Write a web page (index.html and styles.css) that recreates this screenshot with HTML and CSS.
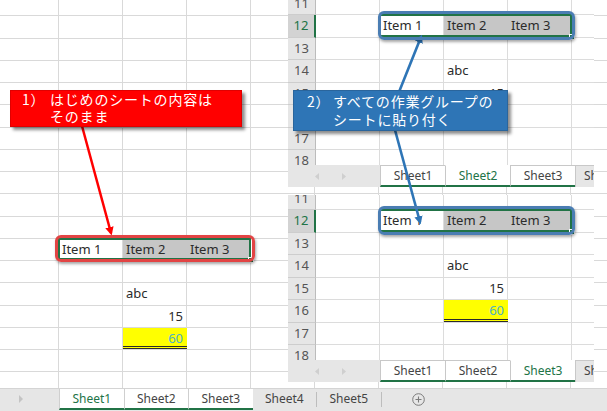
FILE: index.html
```html
<!DOCTYPE html>
<html lang="ja">
<head>
<meta charset="utf-8">
<title>作業グループ</title>
<link rel="stylesheet" href="styles.css">
</head>
<body>
<div class="app">
  <div class="sheet">
    <div class="grid">
      <div class="row"></div><div class="row"></div><div class="row"></div><div class="row"></div>
      <div class="row"></div><div class="row"></div><div class="row"></div><div class="row"></div>
      <div class="row"></div><div class="row"></div><div class="row"></div>
      <div class="row">
        <div class="c"></div>
        <div class="range hl-red">
          <div class="c">Item 1</div><div class="c sel">Item 2</div><div class="c sel">Item 3</div>
          <span class="handle"></span>
        </div>
      </div>
      <div class="row"></div>
      <div class="row"><div class="c"></div><div class="c"></div><div class="c">abc</div></div>
      <div class="row"><div class="c"></div><div class="c"></div><div class="c num">15</div></div>
      <div class="row"><div class="c"></div><div class="c"></div><div class="c num total">60</div></div>
      <div class="row"></div><div class="row"></div>
    </div>
  </div>

  <div class="tabbar">
    <div class="nav"><svg width="6" height="8" viewBox="0 0 6 8"><path d="M1 0 L5 4 L1 8 Z" fill="#c4c4c4"/></svg></div>
    <div class="tab grp on">Sheet1</div>
    <div class="tab grp">Sheet2</div>
    <div class="tab grp">Sheet3</div>
    <div class="tab sep">Sheet4</div>
    <div class="tab sep">Sheet5</div>
    <div class="add"><svg width="13" height="13" viewBox="0 0 13 13"><circle cx="6.5" cy="6.5" r="5.8" fill="none" stroke="#7a7a7a" stroke-width="1"/><path d="M6.5 3.5 V9.5 M3.5 6.5 H9.5" stroke="#7a7a7a" stroke-width="1.1"/></svg></div>
  </div>

  <div class="panel panel-top">
    <div class="prows">
      <div class="prow"><div class="rh">11</div></div>
      <div class="prow"><div class="rh on">12</div><div class="c"></div>
        <div class="range hl-blue"><div class="c">Item 1</div><div class="c sel">Item 2</div><div class="c sel">Item 3</div><span class="handle"></span></div>
      </div>
      <div class="prow"><div class="rh">13</div></div>
      <div class="prow"><div class="rh">14</div><div class="c"></div><div class="c"></div><div class="c">abc</div></div>
      <div class="prow"><div class="rh">15</div><div class="c"></div><div class="c"></div><div class="c num">15</div></div>
      <div class="prow"><div class="rh">16</div><div class="c"></div><div class="c"></div><div class="c num total">60</div></div>
      <div class="prow"><div class="rh">17</div></div>
      <div class="prow"><div class="rh">18</div></div>
    </div>
    <div class="ptabs">
      <div class="pnav">
        <svg width="5" height="7" viewBox="0 0 5 7"><path d="M4 0 L0 3.5 L4 7 Z" fill="#cfcfcf"/></svg>
        <svg width="5" height="7" viewBox="0 0 5 7"><path d="M1 0 L5 3.5 L1 7 Z" fill="#cfcfcf"/></svg>
      </div>
      <div class="ptab grp">Sheet1</div>
      <div class="ptab grp on">Sheet2</div>
      <div class="ptab grp">Sheet3</div>
      <div class="ptab cut">Sheet4</div>
    </div>
  </div>

  <div class="panel panel-bottom">
    <div class="prows">
      <div class="prow"><div class="rh">11</div></div>
      <div class="prow"><div class="rh on">12</div><div class="c"></div>
        <div class="range hl-blue"><div class="c">Item 1</div><div class="c sel">Item 2</div><div class="c sel">Item 3</div><span class="handle"></span></div>
      </div>
      <div class="prow"><div class="rh">13</div></div>
      <div class="prow"><div class="rh">14</div><div class="c"></div><div class="c"></div><div class="c">abc</div></div>
      <div class="prow"><div class="rh">15</div><div class="c"></div><div class="c"></div><div class="c num">15</div></div>
      <div class="prow"><div class="rh">16</div><div class="c"></div><div class="c"></div><div class="c num total">60</div></div>
      <div class="prow"><div class="rh">17</div></div>
      <div class="prow"><div class="rh">18</div></div>
    </div>
    <div class="ptabs">
      <div class="pnav">
        <svg width="5" height="7" viewBox="0 0 5 7"><path d="M4 0 L0 3.5 L4 7 Z" fill="#cfcfcf"/></svg>
        <svg width="5" height="7" viewBox="0 0 5 7"><path d="M1 0 L5 3.5 L1 7 Z" fill="#cfcfcf"/></svg>
      </div>
      <div class="ptab grp">Sheet1</div>
      <div class="ptab grp">Sheet2</div>
      <div class="ptab grp on">Sheet3</div>
      <div class="ptab cut">Sheet4</div>
    </div>
  </div>

  <svg class="arrows" width="607" height="411" viewBox="0 0 607 411">
    <defs>
      <marker id="head-red" viewBox="0 0 10 10" refX="7" refY="5" markerWidth="3.4" markerHeight="3.4" orient="auto">
        <path d="M0 0 L10 5 L0 10 Z" fill="#ff0000"/>
      </marker>
      <marker id="head-blue" viewBox="0 0 10 10" refX="7" refY="5" markerWidth="3.2" markerHeight="3.2" orient="auto">
        <path d="M0 0 L10 5 L0 10 Z" fill="#2e75b6"/>
      </marker>
    </defs>
    <path d="M82 126 L111 233" stroke="#ff0000" stroke-width="2.5" fill="none" marker-end="url(#head-red)"/>
    <path d="M399 92 L421 37" stroke="#2e75b6" stroke-width="2.6" fill="none" marker-end="url(#head-blue)"/>
    <path d="M395 130 L420 222" stroke="#2e75b6" stroke-width="2.6" fill="none" marker-end="url(#head-blue)"/>
  </svg>

  <div class="callout callout-red">
    <span class="cnum">1）</span><span class="ctext">はじめのシートの内容は<br>そのまま</span>
  </div>
  <div class="callout callout-blue">
    <span class="cnum">2）</span><span class="ctext">すべての作業グループの<br>シートに貼り付く</span>
  </div>
</div>
</body>
</html>
```

FILE: styles.css
```css
* { box-sizing: border-box; margin: 0; padding: 0; }

body {
  width: 607px;
  height: 411px;
  overflow: hidden;
  background: #fff;
  font-family: "Noto Sans", "Liberation Sans", sans-serif;
  color: #262626;
}

.app {
  position: relative;
  width: 607px;
  height: 411px;
  display: flex;
  flex-direction: column;
}

/* main sheet */
.sheet {
  flex: 1;
  overflow: hidden;
}

.grid {
  margin: -6px 0 0 -5px;
  width: 650px;
  background: repeating-linear-gradient(to right, transparent 0 63px, #d9d9d9 63px 64px);
}

.row {
  height: 22.25px;
  display: flex;
  border-bottom: 1px solid #d9d9d9;
}

.c {
  flex: none;
  width: 64px;
  height: 100%;
  padding: 0 3px;
  font-size: 13px;
  line-height: 21px;
  white-space: nowrap;
  overflow: hidden;
  color: #2b2b2b;
}

.c.sel { background: #c6c6c6; }
.c.num { text-align: right; padding-right: 4px; }
.c.total {
  background: #ffff00;
  color: #4fb0c6;
  border-bottom: 3px double #2a2a2a;
}

.range {
  position: relative;
  display: flex;
  flex: none;
}

.range::before {
  content: "";
  position: absolute;
  inset: -1px 0 0 -1px;
  border: 2px solid #217346;
}

.handle {
  position: absolute;
  right: -3px;
  bottom: -3px;
  width: 6px;
  height: 6px;
  background: #217346;
  border: 1px solid #fff;
  z-index: 2;
}

.hl-red::after {
  content: "";
  position: absolute;
  inset: -4px -4px -2px -4px;
  border: 3px solid #e24444;
  border-radius: 6px;
  box-shadow: 1px 2px 3px rgba(0, 0, 0, 0.35);
  z-index: 3;
}

.hl-blue::after {
  content: "";
  position: absolute;
  inset: -4px -3px -3px -2px;
  border: 3px solid #4a7db3;
  border-radius: 6px;
  box-shadow: 1px 2px 3px rgba(0, 0, 0, 0.35);
  z-index: 3;
}

/* main tab bar */
.tabbar {
  flex: none;
  height: 23px;
  display: flex;
  align-items: flex-start;
  background: #e6e6e6;
  border-top: 1px solid #d4d4d4;
  font-size: 12px;
  color: #444;
}

.nav {
  width: 59px;
  height: 20px;
  flex: none;
  display: flex;
  align-items: center;
  padding-left: 18px;
}

.tab {
  flex: none;
  width: 64.5px;
  height: 20px;
  line-height: 19px;
  text-align: center;
}

.tab.grp {
  background: #fff;
  border-left: 1px solid #cfcfcf;
  border-bottom: 2px solid #217346;
  height: 21px;
}

.tab.grp:first-of-type { border-left: none; }
.tab.on { color: #217346; }
.tab.sep { border-right: 1px solid #bdbdbd; margin-top: 3px; height: 15px; line-height: 13px; }

.add {
  margin-left: 30px;
  height: 20px;
  display: flex;
  align-items: center;
}

/* floating screenshots */
.panel {
  position: absolute;
  left: 288px;
  width: 306px;
  height: 187px;
  background: #fff;
  display: flex;
  flex-direction: column;
  overflow: hidden;
}

.panel-top { top: 0; }
.panel-bottom { top: 195px; }

.prows {
  flex: 1;
  overflow: hidden;
}

.prow {
  height: 22.5px;
  display: flex;
  border-bottom: 1px solid #dcdcdc;
  background: repeating-linear-gradient(to right, transparent 0 63px, #dcdcdc 63px 64px) 28px 0;
}

.prow:first-child { margin-top: -7.5px; }

.rh {
  flex: none;
  width: 28px;
  height: calc(100% + 1px);
  background: #e6e6e6;
  border-right: 1px solid #bcbcbc;
  border-bottom: 1px solid #cdcdcd;
  font-size: 13px;
  line-height: 21px;
  text-align: center;
  color: #555;
}

.rh.on {
  background: #d3d3d3;
  color: #217346;
  border-right: 2px solid #217346;
}

.ptabs {
  flex: none;
  height: 22px;
  display: flex;
  background: #e6e6e6;
  font-size: 12px;
  color: #444;
}

.pnav {
  flex: none;
  width: 92px;
  display: flex;
  align-items: center;
  gap: 21px;
  padding-left: 27px;
}

.ptab {
  flex: none;
  width: 65px;
  text-align: center;
  line-height: 20px;
}

.ptab.grp {
  background: #fff;
  border-top: 1px solid #c8c8c8;
  border-left: 1px solid #c8c8c8;
  border-bottom: 2px solid #217346;
}

.ptab.on { color: #217346; border-top-color: #fff; }

.ptab.cut {
  flex: 1;
  width: auto;
  text-align: left;
  padding-left: 8px;
  overflow: hidden;
  white-space: nowrap;
  border-left: 1px solid #c8c8c8;
  border-top: 1px solid #c8c8c8;
}

/* overlays */
.arrows {
  position: absolute;
  left: 0;
  top: 0;
  pointer-events: none;
}

.callout {
  position: absolute;
  display: flex;
  color: #fff;
  font-family: "Noto Sans CJK JP", "Noto Sans", sans-serif;
  font-size: 14px;
  letter-spacing: 0.8px;
  box-shadow: 3px 3px 3px rgba(0, 0, 0, 0.45);
}

.cnum { flex: none; }
.ctext { white-space: nowrap; }

.callout-red {
  left: 10px;
  top: 90px;
  width: 232px;
  height: 37px;
  background: #ff0000;
  border: 1px solid #e00000;
  padding: 0 0 0 11px;
  line-height: 17px;
}

.callout-red .cnum { width: 28px; }

.callout-blue {
  left: 293px;
  top: 90px;
  width: 215px;
  height: 41px;
  background: #2e75b6;
  border: 1px solid #2a659c;
  padding: 1px 0 0 13px;
  line-height: 18px;
}

.callout-blue .cnum { width: 26px; }
```
